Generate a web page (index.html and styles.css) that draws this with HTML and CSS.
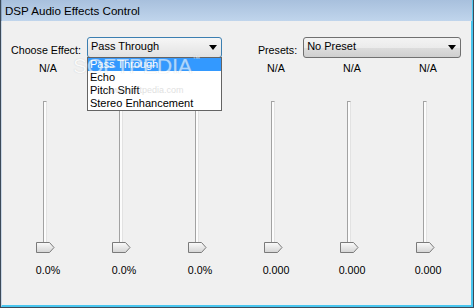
FILE: index.html
```html
<!DOCTYPE html>
<html>
<head>
  <title>DSP Audio Effects Control</title>
  <meta name="viewport" content="width=device-width, initial-scale=1">
  <link rel="stylesheet" href="styles.css">
</head>
<body>
<div class="window">
  <div class="titlebar">DSP Audio Effects Control</div>
  <div class="client">
    <div class="toprow">
      <span class="lbl effect-lbl">Choose Effect:</span>
      <div class="combo focused effect-combo">
        <span class="combo-text">Pass Through</span>
        <span class="arrow"></span>
        <ul class="droplist">
          <li class="sel">Pass Through</li>
          <li>Echo</li>
          <li>Pitch Shift</li>
          <li>Stereo Enhancement</li>
        </ul>
      </div>
      <span class="lbl preset-lbl">Presets:</span>
      <div class="combo preset-combo">
        <span class="combo-text">No Preset</span>
        <span class="arrow"></span>
      </div>
    </div>

    <div class="channels">
      <div class="channel">
        <div class="cap">N/A</div>
        <div class="slider"><div class="track"></div><svg class="thumb" width="19" height="11" viewBox="0 0 19 11"><defs><linearGradient id="tg" x1="0" y1="0" x2="0" y2="1"><stop offset="0" stop-color="#fbfbfb"/><stop offset="1" stop-color="#d4d4d4"/></linearGradient></defs><path d="M0.5 0.5 H13.5 L18 5.5 L13.5 10.5 H0.5 Z" fill="url(#tg)" stroke="#7a7a7a"/></svg></div>
        <div class="val">0.0%</div>
      </div>
      <div class="channel">
        <div class="cap">N/A</div>
        <div class="slider"><div class="track"></div><svg class="thumb" width="19" height="11" viewBox="0 0 19 11"><path d="M0.5 0.5 H13.5 L18 5.5 L13.5 10.5 H0.5 Z" fill="url(#tg)" stroke="#7a7a7a"/></svg></div>
        <div class="val">0.0%</div>
      </div>
      <div class="channel">
        <div class="cap">N/A</div>
        <div class="slider"><div class="track"></div><svg class="thumb" width="19" height="11" viewBox="0 0 19 11"><path d="M0.5 0.5 H13.5 L18 5.5 L13.5 10.5 H0.5 Z" fill="url(#tg)" stroke="#7a7a7a"/></svg></div>
        <div class="val">0.0%</div>
      </div>
      <div class="channel">
        <div class="cap">N/A</div>
        <div class="slider"><div class="track"></div><svg class="thumb" width="19" height="11" viewBox="0 0 19 11"><path d="M0.5 0.5 H13.5 L18 5.5 L13.5 10.5 H0.5 Z" fill="url(#tg)" stroke="#7a7a7a"/></svg></div>
        <div class="val">0.000</div>
      </div>
      <div class="channel">
        <div class="cap">N/A</div>
        <div class="slider"><div class="track"></div><svg class="thumb" width="19" height="11" viewBox="0 0 19 11"><path d="M0.5 0.5 H13.5 L18 5.5 L13.5 10.5 H0.5 Z" fill="url(#tg)" stroke="#7a7a7a"/></svg></div>
        <div class="val">0.000</div>
      </div>
      <div class="channel">
        <div class="cap">N/A</div>
        <div class="slider"><div class="track"></div><svg class="thumb" width="19" height="11" viewBox="0 0 19 11"><path d="M0.5 0.5 H13.5 L18 5.5 L13.5 10.5 H0.5 Z" fill="url(#tg)" stroke="#7a7a7a"/></svg></div>
        <div class="val">0.000</div>
      </div>
    </div>

    <div class="watermark">SOFTPEDIA<sup>™</sup></div>
    <div class="watermark-url">www.softpedia.com</div>
  </div>
</div>
</body>
</html>
```

FILE: styles.css
```css
html, body {
  margin: 0;
  padding: 0;
}

body {
  font-family: "Liberation Sans", Arial, sans-serif;
  font-size: 10.7px;
  color: #000;
  background: #f0f0f0;
}

.window {
  width: 474px;
  height: 308px;
  box-sizing: border-box;
  border-left: 1px solid #3c4a58;
  border-right: 1px solid #3c4a58;
  border-bottom: 1px solid #3c4a58;
  display: flex;
  flex-direction: column;
  background: #f0f0f0;
}

.titlebar {
  height: 21px;
  line-height: 22px;
  padding-left: 3px;
  font-size: 11.6px;
  color: #000;
  background: linear-gradient(#a8c0dd, #c0d5ec);
  border-left: 1px solid #8fa8c6;
  border-right: 1px solid #4fc8ee;
}

.client {
  position: relative;
  flex: 1;
  border-left: 1px solid #c8d6e6;
  border-right: 2px solid #49c6ef;
  border-bottom: 2px solid #49c6ef;
  padding: 16px 0 0 8px;
}

.toprow {
  display: flex;
  align-items: flex-end;
  height: 21px;
}

.lbl {
  line-height: 13px;
  margin-bottom: 1px;
}

.effect-lbl {
  margin-left: 1px;
  margin-right: 6px;
}

.preset-lbl {
  margin-left: 36px;
  margin-right: 6px;
}

.combo {
  position: relative;
  height: 21px;
  box-sizing: border-box;
  border: 1px solid #707070;
  border-radius: 3px;
  background: linear-gradient(#f3f3f3 0%, #ebebeb 50%, #dddddd 51%, #cfcfcf 100%);
  display: flex;
  align-items: center;
}

.combo.focused {
  border-color: #3c7fb1;
  background: linear-gradient(#f6f6f6, #e2e2e2);
}

.effect-combo {
  width: 135px;
}

.preset-combo {
  width: 158px;
}

.combo-text {
  padding-left: 3px;
  font-size: 11px;
  line-height: 13px;
  margin-top: -2px;
  flex: 1;
}

.arrow {
  width: 0;
  height: 0;
  border-left: 4px solid transparent;
  border-right: 4px solid transparent;
  border-top: 5px solid #000;
  margin-right: 4px;
  margin-top: -1px;
}

.droplist {
  position: absolute;
  left: -1px;
  top: 19px;
  width: 135px;
  box-sizing: border-box;
  margin: 0;
  padding: 0;
  list-style: none;
  background: #fff;
  border: 1px solid #646464;
  z-index: 5;
}

.droplist li {
  height: 13px;
  line-height: 13px;
  padding-left: 2px;
  font-size: 11px;
}

.droplist li.sel {
  background: #3399ff;
  color: #fff;
}

.channels {
  display: flex;
  margin-top: 4px;
}

.channel {
  width: 76px;
  display: flex;
  flex-direction: column;
  align-items: center;
}

.cap, .val {
  line-height: 13px;
}

.slider {
  position: relative;
  width: 19px;
  height: 152px;
  margin-top: 26px;
  margin-right: 6px;
}

.track {
  position: absolute;
  left: 7px;
  top: 0;
  bottom: 5px;
  width: 2px;
  border-left: 1px solid #a2a2a2;
  border-right: 1px solid #e2e2e2;
  border-top: 1px solid #a2a2a2;
  background: #fcfcfc;
}

.thumb {
  position: absolute;
  left: 0;
  bottom: 0;
  display: block;
}

.val {
  margin-top: 11px;
}

.watermark {
  position: absolute;
  left: 71px;
  top: 33px;
  font-size: 21px;
  color: #ffffff;
  opacity: 0.6;
  text-shadow: 0 0 1px #a8a8a8;
  z-index: 6;
  pointer-events: none;
}

.watermark sup {
  font-size: 8px;
  vertical-align: 12px;
}

.watermark-url {
  position: absolute;
  left: 104px;
  top: 64px;
  font-size: 9px;
  color: #9a9a9a;
  opacity: 0.3;
  z-index: 6;
}
```
